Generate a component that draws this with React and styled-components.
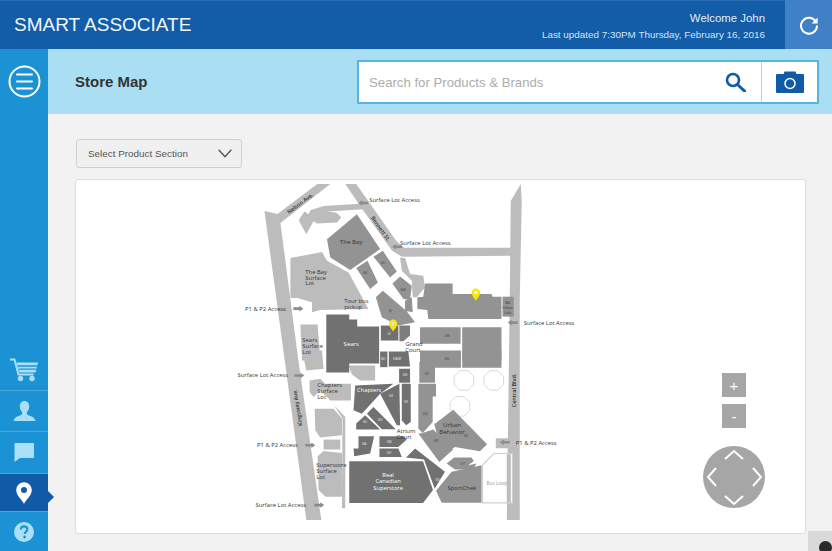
import React from "react";
import styled, { createGlobalStyle } from "styled-components";

const Global = createGlobalStyle`
  html, body { margin: 0; padding: 0; height: 100%; overflow: hidden; background: #f2f2f2; }
  * { box-sizing: border-box; }
  body { font-family: "Liberation Sans", Arial, sans-serif; }
`;

const Shell = styled.div`position: relative; width: 832px; height: 551px; overflow: hidden; display: flex; flex-direction: column;`;
const Header = styled.header`height: 49px; flex: none; display: flex; align-items: stretch; background: #125ca8; border-top: 1px solid #2c6eb4; color: #fff;`;
const Brand = styled.h1`margin: 0; flex: 1; padding: 0 0 1px 14px; align-self: center; font-size: 19px; font-weight: 400; color: #f2f7fb;`;
const Status = styled.div`display: flex; flex-direction: column; align-items: flex-end; justify-content: center; gap: 3px; padding: 1px 20px 0 0; color: #e3edf6;`;
const Welcome = styled.div`font-size: 11.4px; line-height: 14px;`;
const Updated = styled.div`font-size: 9.9px; line-height: 13px; color: #d5e3f0;`;
const RefreshButton = styled.div`width: 47px; margin-top: -1px; display: flex; align-items: center; justify-content: center; background: #3f80c6;`;
const Body = styled.div`flex: 1; display: flex; min-height: 0;`;
const Rail = styled.nav`width: 48px; flex: none; display: flex; flex-direction: column; background: #1a92d3;`;
const MenuSlot = styled.div`height: 65px; display: flex; align-items: center; justify-content: center; padding-bottom: 1px; margin-bottom: auto;`;
const RailItem = styled.div`
  position: relative; height: ${p => p.$h}px; display: flex; align-items: center; justify-content: center;
  border-bottom: ${p => p.$last ? "none" : "1px solid #4aa9dd"};
  background: ${p => p.$active ? "#0f5ba8" : "transparent"};
  ${p => p.$active ? `&::after { content: ""; position: absolute; left: 48px; top: 17px; border-left: 6px solid #0f5ba8; border-top: 6px solid transparent; border-bottom: 6px solid transparent; }` : ""}
`;
const Main = styled.main`flex: 1; min-width: 0; display: flex; flex-direction: column;`;
const SubHeader = styled.div`height: 65px; flex: none; display: flex; align-items: center; justify-content: space-between; padding: 0 13px 0 27px; background: #aadff3;`;
const Title = styled.h2`margin: 0; font-size: 15px; font-weight: 700; color: #333;`;
const Search = styled.div`width: 462px; height: 44px; margin-top: 1px; display: flex; background: #fff; border: 2px solid #55b5e2;`;
const SearchInput = styled.div`flex: 1; display: flex; align-items: center; justify-content: space-between; padding: 0 15px 0 10px; font-size: 13.2px; color: #adadad;`;
const CameraButton = styled.div`width: 56px; flex: none; display: flex; align-items: center; justify-content: center; border-left: 1px solid #ccc;`;
const Content = styled.div`flex: 1; min-height: 0; padding: 25px 26px 17px 27px; display: flex; flex-direction: column; gap: 11px; background: #f2f2f2;`;
const Select = styled.div`width: 166px; height: 29px; margin-left: 1px; display: flex; align-items: center; justify-content: space-between; padding: 0 9px 0 11px; background: #f0f0f0; border: 1px solid #cfcfcf; border-radius: 3px; font-size: 9.9px; color: #555;`;
const MapCard = styled.section`position: relative; flex: 1; min-height: 0; background: #fff; border: 1px solid #dcdcdc; border-radius: 3px; overflow: hidden;`;
const MapArt = styled.svg`display: block; width: 100%; height: 100%;`;
const MapControls = styled.div`position: absolute; left: 627px; top: 193px; width: 62px; display: flex; flex-direction: column; align-items: center; gap: 7px;`;
const ZoomButton = styled.div`width: 24px; height: 24px; display: flex; align-items: center; justify-content: center; background: #a6a6a6; color: #fff; font-size: 15px; line-height: 1;`;
const Pad = styled.svg`display: block; margin-top: 11px;`;
const Corner = styled.div`position: absolute; right: 0; bottom: 0; width: 24px; height: 20px; background: #d9d9d9; overflow: hidden;
  &::after { content: ""; position: absolute; left: 11px; top: 10px; width: 13px; height: 13px; border-radius: 50%; background: #2a2a2a; }`;

const LIGHT = "#bcbcbc", MID = "#939393", DARK = "#717171";
const Z = { a: [230, 180], b: [400, 180], c: [230, 350], d: [400, 350] };
const pts = (k, s) => s.trim().split(/\s+/).map(p => { const [x, y] = p.split(",").map(Number); return `${(Z[k][0] + x / 3).toFixed(1)},${(Z[k][1] + y / 3).toFixed(1)}`; }).join(" ");

const SHAPES = [
  [LIGHT, null, "264,210 277,213 317,183 330,183 280,222 298,360 321,520 306,520"],
  [LIGHT, null, "345,183 356,183 373,207 396,240 404,247 512,247 512,255 402,256 392,250 362,208"],
  [LIGHT, null, "521,183 522,200 520,300 520,520 507,520 510,300 511,200"],
  [LIGHT, "a", "205,118 222,92 235,100 240,88 280,75 390,68 400,85 290,92 318,95 333,110 320,125 260,128 250,120 228,160"],
  [LIGHT, "a", "180,232 275,214 290,240 355,275 415,385 270,388 245,395 245,365 200,352 180,352"],
  [LIGHT, "a", "210,432 262,432 270,540 215,540"],
  [LIGHT, "c", "215,0 275,0 280,55 228,60"],
  [LIGHT, "c", "238,90 270,85 285,100 362,100 362,150 300,150 290,140 270,120 250,140 238,125"],
  [LIGHT, "c", "253,175 310,175 335,205 335,255 270,262 255,240"],
  [LIGHT, "c", "280,268 330,268 330,298 280,298"],
  [LIGHT, "c", "262,318 280,302 335,308 335,440 285,440 265,420"],
  [LIGHT, "c", "312,165 345,200 345,475 335,475 337,205"],
  [LIGHT, "c", "355,45 435,45 435,90 390,90 365,72"],
  [LIGHT, "b", "0,230 15,232 30,280 70,285 75,320 50,350 38,350 35,300 5,270"],
  [MID, "a", "290,175 380,100 450,205 360,268 300,230"],
  [MID, "a", "378,262 412,240 443,305 420,325"],
  [MID, "a", "430,228 458,210 500,272 480,290"],
  [MID, "a", "487,308 510,287 545,315 540,358 520,355"],
  [MID, "a", "437,350 458,330 530,392 555,425 505,435 455,410"],
  [MID, "a", "525,360 545,350 548,395 525,390"],
  [MID, "b", "75,308 158,308 158,340 275,340 278,348 305,348 305,415 85,415 82,388 52,385 52,350 70,348"],
  [MID, "b", "308,348 342,348 342,408 308,408"],
  [MID, "b", "60,440 182,440 182,490 60,490"],
  [MID, "b", "60,515 183,515 183,540 60,540"],
  [MID, "b", "187,440 305,440 305,540 187,540"],
  [MID, "d", "60,0 183,0 183,52 60,52"],
  [MID, "d", "187,0 305,0 305,52 187,52"],
  [MID, "d", "58,35 105,35 105,97 58,97"],
  [MID, "d", "55,100 108,100 108,138 98,138 98,215 68,248 55,235"],
  [MID, "d", "62,250 100,238 160,298 118,335 55,250"],
  [MID, "d", "103,222 160,178 262,282 240,303 165,290 128,312"],
  [MID, "d", "140,340 163,322 215,322 222,332 205,345 230,340 218,358 165,358"],
  [MID, "d", "108,422 155,365 245,345 245,458 125,458"],
  [DARK, null, "326,314 349,314 349,319 357,319 357,326 379,326 379,363 349,363 349,372 326,372"],
  [DARK, "a", "452,435 505,435 505,480 452,480"],
  ["#7d7d7d", "a", "508,435 540,435 540,465 520,482 508,482"],
  [DARK, "c", "450,3 472,3 472,50 450,50"],
  [DARK, "c", "476,3 535,3 540,48 476,48"],
  [DARK, "c", "507,55 540,55 540,97 507,97"],
  [DARK, "c", "375,105 490,100 450,130 395,190 370,180"],
  [DARK, "c", "450,130 508,100 510,225 500,225"],
  [DARK, "c", "515,100 542,100 542,215 528,225 515,210"],
  [DARK, "c", "378,220 405,195 450,238 378,238"],
  [DARK, "c", "410,190 430,170 497,237 455,237"],
  [DARK, "c", "448,258 520,258 530,268 505,290 448,290"],
  [DARK, "c", "448,295 505,295 515,320 448,320"],
  [DARK, "c", "385,258 432,258 420,310 372,318 370,295 385,295"],
  [DARK, "d", "18,322 45,295 135,365 104,416 72,328"],
  [DARK, null, "349,461 423,461 433,490 423,503 349,503"],
];

const LABELS = [
  ["Surface Lot Access", 369, 201], ["Surface Lot Access", 400, 244.5], ["Surface Lot Access", 524, 324],
  ["P1 & P2 Access", 244.5, 310], ["Surface Lot Access", 237, 377], ["P1 & P2 Access", 256.5, 446.5],
  ["Surface Lot Access", 255, 506.5], ["P1 & P2 Access", 516, 444.5],
  ["The Bay", 351, 243, "middle", "#333", 6.2],
  ["The Bay", 305, 273], ["Surface", 305, 279], ["Lot", 305, 284.5],
  ["Tour bus", 344, 302], ["pickup", 344, 308],
  ["Sears", 302, 341.5], ["Surface", 302, 347.5], ["Lot", 302, 353],
  ["Sears", 351, 345.5, "middle", "#fff", 6],
  ["Grand", 414, 345.5, "middle"], ["Court", 413, 351.5, "middle"],
  ["Chapters", 317, 386.5], ["Surface", 317, 392.5], ["Lot", 317, 398.500],
  ["Chapters", 369, 391.5, "middle", "#fff", 5.8],
  ["Atrium", 406, 433, "middle"], ["Court", 404, 438.8, "middle"],
  ["Urban", 452, 426.5, "middle", "#333", 6.2], ["Behavior", 452, 433.5, "middle", "#333", 6.2],
  ["Superstore", 316, 467], ["Surface", 316, 473], ["Lot", 316, 479],
  ["Real", 388, 476.5, "middle", "#fff", 5.8], ["Canadian", 388, 483, "middle", "#fff", 5.8], ["Superstore", 388, 489.5, "middle", "#fff", 5.8],
  ["SportChek", 462, 489.5, "middle", "#333", 6],
  ["Bus Loop", 497, 484.5, "middle", "#999", 4.8],
  ["BG", 508, 303, "middle", "#333", 3.6], ["Urban", 508, 308, "middle", "#333", 3.6], ["Cafe", 508, 313, "middle", "#333", 3.6],
  ["GK", 365, 273.5, "middle", "#444", 3.4], ["GL", 383, 263, "middle", "#444", 3.4], ["GM", 403, 290, "middle", "#444", 3.4],
  ["GJ", 390, 311, "middle", "#444", 3.4], ["GI", 389, 334, "middle", "#eee", 3.2], ["GN", 447, 336, "middle", "#444", 3.4],
  ["GO", 447, 360, "middle", "#444", 3.4], ["GP", 427, 375, "middle", "#444", 3.4], ["GQ", 425, 415, "middle", "#444", 3.4],
  ["GR", 436, 442, "middle", "#444", 3.4], ["GS", 466, 437, "middle", "#444", 3.4], ["GT", 463, 464.5, "middle", "#444", 3.4],
  ["GU", 438, 481, "middle", "#eee", 3.4], ["GH", 383, 360, "middle", "#eee", 3.4], ["H&M", 397, 360, "middle", "#eee", 3.4],
  ["GG", 405, 376, "middle", "#eee", 3.4], ["GE", 391, 397, "middle", "#eee", 3.4], ["GF", 406, 403, "middle", "#eee", 3.4],
  ["GC", 365, 423, "middle", "#eee", 3.4], ["GD", 380, 421, "middle", "#eee", 3.4], ["GB", 389, 443, "middle", "#eee", 3.4],
  ["GV", 389, 454, "middle", "#eee", 3.4], ["GA", 364, 445, "middle", "#eee", 3.4],
];

const ROAD_LABELS = [
  ["Nelson Ave.", 301, 204, -37], ["Bennett St.", 379, 229, 55], ["Kingsway Ave.", 299, 407, -99], ["Central Blvd.", 516, 390, -90],
];
const ARROWS = [[363, 202, -1], [397, 246, -1], [298, 308, 1], [299, 375, 1], [310, 445, 1], [319, 505, 1], [513, 322, -1], [505, 442, -1]];
const OCTS = [[464, 380], [494, 380], [460, 406]];
const octagon = (cx, cy, r) => Array.from({ length: 8 }, (_, i) => {
  const a = Math.PI / 8 + i * Math.PI / 4;
  return `${(cx + r * Math.cos(a)).toFixed(1)},${(cy + r * Math.sin(a)).toFixed(1)}`;
}).join(" ");

const MallMap = () => (
  <MapArt viewBox="75 179 730 354" preserveAspectRatio="xMinYMin meet">
    {OCTS.map(([x, y]) => <polygon key={x + "-" + y} points={octagon(x, y, 10.6)} fill="none" stroke="#d8d8d8" strokeWidth="1" />)}
    {SHAPES.map(([fill, k, s], i) => <polygon key={i} fill={fill} points={k ? pts(k, s) : s} />)}
    <polygon points={pts("d", "248,345 282,310 338,310 338,458 248,458")} fill="#fff" stroke="#cfcfcf" strokeWidth="1.2" />
    <rect x="507" y="454" width="4" height="48" fill={LIGHT} />
    <rect x="496" y="438" width="14" height="10" fill={LIGHT} />
    {ARROWS.map(([x, y, d]) => (
      <path key={x} d={`M${x - 5 * d} ${y - 1.3}h${6 * d}v-1.500l${4 * d} 2.800l${-4 * d} 2.800v-1.500h${-6 * d}z`} fill="#8c8c8c" />
    ))}
    {LABELS.map(([t, x, y, a, f, s], i) => (
      <text key={i} x={x} y={y} textAnchor={a || "start"} fill={f || "#333"} fontFamily="'Open Sans', sans-serif" fontSize={s || 5.9} fontWeight="500">{t}</text>
    ))}
    {ROAD_LABELS.map(([t, x, y, r]) => (
      <text key={t} x={x} y={y} transform={`rotate(${r} ${x} ${y})`} textAnchor="middle" fill="#333" fontFamily="'Open Sans', sans-serif" fontSize="5.500" fontWeight="600">{t}</text>
    ))}
    <path d="M476 300c-1.500-2.600-4.200-5-4.200-8a4.200 4.200 0 0 1 8.400 0c0 3-2.700 5.400-4.200 8z" fill="#f6e800" />
    <circle cx="476" cy="291.800" r="1.700" fill="#fff" />
    <path d="M393 331c-1.500-2.600-4.200-5-4.200-8a4.200 4.200 0 0 1 8.400 0c0 3-2.700 5.400-4.200 8z" fill="#f6e800" />
    <circle cx="393" cy="322.800" r="1.700" fill="#d8e4ee" />
  </MapArt>
);

const Icon = {
  Refresh: () => (
    <svg width="20" height="20" viewBox="0 0 20 20" fill="none">
      <path d="M16.800 6.500A8 8 0 1 0 18 10.500" stroke="#fff" strokeWidth="2" />
      <path d="M18.600 2.500v6h-6z" fill="#fff" />
    </svg>
  ),
  Menu: () => (
    <svg width="33" height="33" viewBox="0 0 33 33" fill="none" stroke="#fff" strokeWidth="2">
      <circle cx="16.500" cy="16.500" r="15" />
      <path d="M9 9.500h15M9 16.500h15M9 23.500h15" strokeLinecap="round" />
    </svg>
  ),
  Cart: () => (
    <svg width="30" height="24" viewBox="0 0 30 24" fill="none">
      <path d="M1 1.500h4.500l4 15h15" stroke="#a9e0f8" strokeWidth="2" />
      <path d="M7.500 4.500h21.500l-2.500 10h-16z" fill="#a9e0f8" />
      <path d="M9 8h19M10 11.200h17" stroke="#1a92d3" strokeWidth="1.300" />
      <circle cx="11.500" cy="20.500" r="2.700" fill="#a9e0f8" />
      <circle cx="23" cy="20.500" r="2.700" fill="#a9e0f8" />
    </svg>
  ),
  Person: () => (
    <svg width="23" height="22" viewBox="0 0 23 22" fill="#a9e0f8">
      <path d="M11.500 1c3 0 4.700 2.400 4.700 5.400 0 2.400-1 4.400-2.300 5.600-.5 2 .4 3 2.800 3.800 2.800.9 5 2 5.800 5.200H.5c.8-3.200 3-4.300 5.800-5.200 2.400-.8 3.300-1.800 2.800-3.800C7.800 10.800 6.800 8.800 6.800 6.400 6.800 3.400 8.500 1 11.500 1z" />
    </svg>
  ),
  Chat: () => (
    <svg width="20" height="19" viewBox="0 0 20 19" fill="#a9e0f8">
      <path d="M1 0h18a1 1 0 0 1 1 1v13a1 1 0 0 1-1 1H6l-5.500 4V1a1 1 0 0 1 .5-1z" />
    </svg>
  ),
  Pin: () => (
    <svg width="16" height="22" viewBox="0 0 16 22">
      <path fillRule="evenodd" fill="#fff" d="M8 22C6 17.500.2 13.500.2 8a7.800 7.800 0 0 1 15.600 0C15.800 13.500 10 17.500 8 22zM8 5a3 3 0 1 0 0 6 3 3 0 0 0 0-6z" />
    </svg>
  ),
  Help: () => (
    <svg width="20" height="20" viewBox="0 0 20 20">
      <circle cx="10" cy="10" r="10" fill="#a9e0f8" />
      <path d="M6.800 7.600c0-2 1.400-3.200 3.300-3.200s3.200 1.100 3.200 2.800c0 2.400-2.600 2.500-2.600 4.800" fill="none" stroke="#1a92d3" strokeWidth="2.100" />
      <circle cx="10.600" cy="15" r="1.400" fill="#1a92d3" />
    </svg>
  ),
  Search: () => (
    <svg width="21" height="20" viewBox="0 0 21 20" fill="none" stroke="#0f5ba8">
      <circle cx="8" cy="8" r="6" strokeWidth="2.600" />
      <path d="M12.500 12.500l7 6.500" strokeWidth="3" strokeLinecap="round" />
    </svg>
  ),
  Camera: () => (
    <svg width="28" height="22" viewBox="0 0 28 22">
      <path d="M1 3h6.500l1-2.500h11l1 2.500H27a1 1 0 0 1 1 1v17a1 1 0 0 1-1 1H1a1 1 0 0 1-1-1V4a1 1 0 0 1 1-1z" fill="#0f5ba8" />
      <circle cx="14" cy="12.500" r="5" fill="none" stroke="#fff" strokeWidth="1.500" />
    </svg>
  ),
  Chevron: () => (
    <svg width="14" height="9" viewBox="0 0 14 9" fill="none" stroke="#555" strokeWidth="1.400">
      <path d="M.7.800L7 7.800 13.300.8" />
    </svg>
  ),
};

export default function App() {
  return (
    <Shell>
      <Global />
      <Header>
        <Brand>SMART ASSOCIATE</Brand>
        <Status>
          <Welcome>Welcome John</Welcome>
          <Updated>Last updated 7:30PM Thursday, February 16, 2016</Updated>
        </Status>
        <RefreshButton><Icon.Refresh /></RefreshButton>
      </Header>
      <Body>
        <Rail>
          <MenuSlot><Icon.Menu /></MenuSlot>
          <RailItem $h={41}><Icon.Cart /></RailItem>
          <RailItem $h={41}><Icon.Person /></RailItem>
          <RailItem $h={42}><Icon.Chat /></RailItem>
          <RailItem $h={38} $active><Icon.Pin /></RailItem>
          <RailItem $h={39} $last><Icon.Help /></RailItem>
        </Rail>
        <Main>
          <SubHeader>
            <Title>Store Map</Title>
            <Search>
              <SearchInput>
                Search for Products &amp; Brands
                <Icon.Search />
              </SearchInput>
              <CameraButton><Icon.Camera /></CameraButton>
            </Search>
          </SubHeader>
          <Content>
            <Select>Select Product Section<Icon.Chevron /></Select>
            <MapCard>
              <MallMap />
              <MapControls>
                <ZoomButton>+</ZoomButton>
                <ZoomButton>-</ZoomButton>
                <Pad width="62" height="62" viewBox="0 0 62 62" fill="none">
                  <circle cx="31" cy="31" r="31" fill="#a6a6a6" />
                  <path d="M22 13l9-8 9 8M22 50l9 8 9-8M13 22l-8 9 8 9M50 22l8 9-8 9" stroke="#fff" strokeWidth="2" />
                </Pad>
              </MapControls>
            </MapCard>
          </Content>
        </Main>
      </Body>
      <Corner />
    </Shell>
  );
}
